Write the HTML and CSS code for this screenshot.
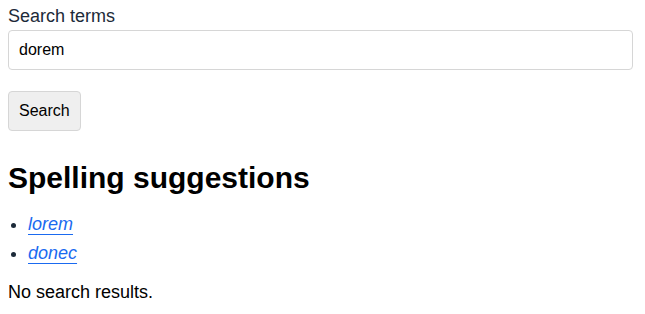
FILE: index.html
```html
<!DOCTYPE html>
<html lang="en">
<head>
    <meta charset="UTF-8">
    <meta name="viewport" content="width=device-width, initial-scale=1.0">
    <title>Search</title>
    <link rel="stylesheet" href="styles.css">
</head>
<body>
    <form class="search-form">
        <label class="search-label" for="terms">Search terms</label>
        <input class="search-input" type="text" id="terms" value="dorem">
        <button class="search-button" type="submit">Search</button>
    </form>

    <h1 class="suggest-title">Spelling suggestions</h1>
    <ul class="suggest-list">
        <li><a href="#">lorem</a></li>
        <li><a href="#">donec</a></li>
    </ul>
    <p class="no-results">No search results.</p>
</body>
</html>
```

FILE: styles.css
```css
body {
    margin: 8px;
    font-family: "Liberation Sans", Arial, sans-serif;
    font-size: 18px;
    color: #000000;
    background: #ffffff;
}
.search-form {
    display: flex;
    flex-direction: column;
    align-items: flex-start;
}
.search-label {
    font-size: 18px;
    line-height: 20px;
    color: #1c2a39;
    margin-top: -2px;
    margin-bottom: 4px;
}
.search-input {
    box-sizing: border-box;
    width: calc(100% - 4px);
    height: 40px;
    padding: 0 10px;
    border: 1px solid #d6d6d6;
    border-radius: 4px;
    font-family: "Liberation Sans", Arial, sans-serif;
    font-size: 16px;
    color: #000000;
}
.search-button {
    box-sizing: border-box;
    margin-top: 21px;
    height: 40px;
    padding: 0 10px;
    background: #efefef;
    border: 1px solid #d6d6d6;
    border-radius: 4px;
    font-family: "Liberation Sans", Arial, sans-serif;
    font-size: 16px;
    color: #000000;
}
.suggest-title {
    font-size: 30px;
    margin: 30px 0 15px;
}
.suggest-list {
    margin: 0;
    padding-left: 20px;
    color: #1c2a39;
}
.suggest-list li {
    line-height: 29px;
}
.suggest-list a {
    color: #1a6af0;
    font-style: italic;
    text-underline-offset: 4px;
}
.no-results {
    margin: 14px 0 0;
}
```
